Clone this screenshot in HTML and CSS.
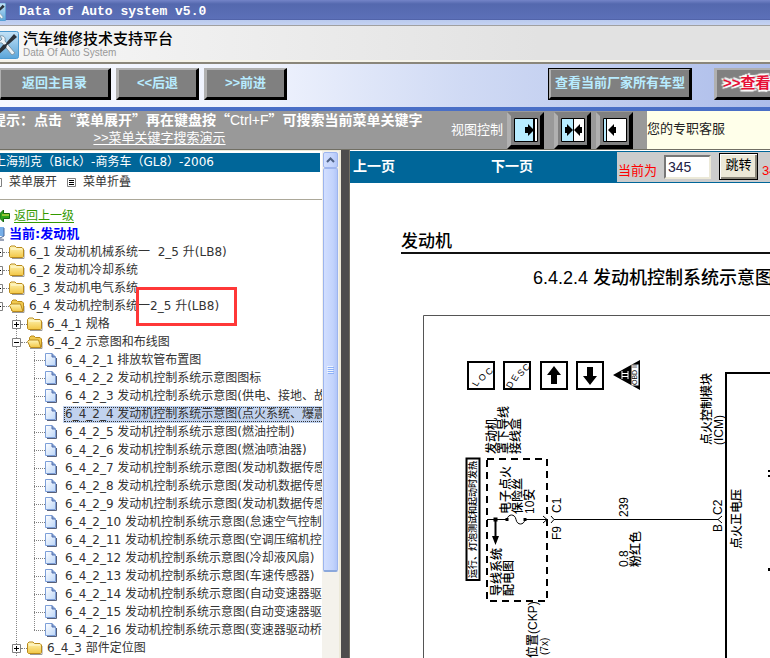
FILE: index.html
```html
<!DOCTYPE html>
<html lang="zh-CN">
<head>
<meta charset="utf-8">
<title>Data of Auto system v5.0</title>
<link rel="stylesheet" href="styles.css">
</head>
<body>
<svg class="defs" width="0" height="0" aria-hidden="true">
  <defs>
    <linearGradient id="fold" x1="0" y1="0" x2="0" y2="1"><stop offset="0" stop-color="#fff6b8"/><stop offset="1" stop-color="#f2c644"/></linearGradient>
    <linearGradient id="sheet" x1="0" y1="0" x2="1" y2="1"><stop offset="0" stop-color="#ffffff"/><stop offset="1" stop-color="#bcd6f8"/></linearGradient>
    <linearGradient id="tile" x1="0" y1="0" x2="0" y2="1"><stop offset="0" stop-color="#c4e2f6"/><stop offset="1" stop-color="#5aa5da"/></linearGradient>
    <symbol id="folder" viewBox="0 0 16 14">
      <path d="M3 13.5h12V5" fill="none" stroke="#999" stroke-width="1"/>
      <path d="M.5 11.500V2.500L2 1h4l1.500 1.500H13L14.500 4v7.500L13.500 12.500h-12z" fill="url(#fold)" stroke="#b98a1c"/>
      <path d="M2 4h11" stroke="#fffbdc"/>
    </symbol>
    <symbol id="folder-open" viewBox="0 0 16 14">
      <path d="M3 13.500h12V7" fill="none" stroke="#999"/>
      <path d="M2.500 11.500V2.500L4 1h3l1.500 1.500H13L14.500 4v8z" fill="#f0c94f" stroke="#b98a1c"/>
      <path d="M.5 6.500L2 5h9.500l2.500 7.500H3.500z" fill="url(#fold)" stroke="#b98a1c"/>
    </symbol>
    <symbol id="page" viewBox="0 0 12 14">
      <path d="M2 13.500h9.500V5" fill="none" stroke="#555e78"/>
      <path d="M.5.500H7L10.500 4v8.500H.500z" fill="url(#sheet)" stroke="#7d9fd8"/>
      <path d="M7 .500V4h3.500" fill="#7f9fd4" stroke="#5672ae"/>
    </symbol>
    <symbol id="logo" viewBox="0 0 28 28">
      <rect x=".5" y=".5" width="27" height="27" rx="2" fill="url(#tile)" stroke="#4d9ad0"/>
      <path d="M6 6c-1 4 1 6 5 6l10 12 3-2L14 10c1-4-2-6-5-5l2 3-2 2z" fill="#eef4f8" stroke="#7d97a8"/>
      <path d="M26 6l-8 7-2 1-1 3-9 8-2-2 8-9 3-1 1-2 7-8z" fill="#2c3138"/>
      <path d="M7 22l-3 4" stroke="#fff" stroke-width="2"/>
    </symbol>
    <symbol id="plus" viewBox="0 0 9 9"><path d="M.5.500h8v8h-8z" fill="#fff" stroke="#808080"/><path d="M2 4.500h5M4.500 2v5" stroke="#000"/></symbol>
    <symbol id="minus" viewBox="0 0 9 9"><path d="M.5.500h8v8h-8z" fill="#fff" stroke="#808080"/><path d="M2 4.500h5" stroke="#000"/></symbol>
    <symbol id="list" viewBox="0 0 9 9"><path d="M.5.500h8v8h-8z" fill="#fff" stroke="#808080"/><path d="M2 2.500h5M2 4.500h5M2 6.500h5" stroke="#000"/></symbol>
  </defs>
</svg>

<header class="titlebar">
  <svg class="title-icon" width="6" height="18" viewBox="14 0 9 28" preserveAspectRatio="xMaxYMid slice" aria-hidden="true"><use href="#logo" x="-5" width="28" height="28"/></svg>
  <span>Data of Auto system v5.0</span>
</header>

<div class="banner">
  <svg class="banner-logo" width="19" height="28" viewBox="9 0 19 28" aria-hidden="true"><use href="#logo" width="28" height="28"/></svg>
  <div class="brand">
    <h1>汽车维修技术支持平台</h1>
    <p>Data Of Auto System</p>
  </div>
</div>

<nav class="toolbar">
  <button class="bevel main" type="button">返回主目录</button>
  <button class="bevel step" type="button">&lt;&lt;后退</button>
  <button class="bevel step" type="button">&gt;&gt;前进</button>
  <button class="bevel models" type="button">查看当前厂家所有车型</button>
  <button class="bevel promo" type="button">&gt;&gt;查看</button>
</nav>

<section class="tips">
  <div class="tip-text">
    <p class="tip">提示：点击“菜单展开”再在键盘按“<span class="key">Ctrl+F</span>”可搜索当前菜单关键字</p>
    <a class="demo" href="#demo">&gt;&gt;菜单关键字搜索演示</a>
  </div>
  <div class="view">
    <span>视图控制</span>
    <button class="view-btn" type="button" aria-label="左侧展开"><svg width="24" height="24"><path d="M.5.500h23v23H.500z" fill="#fff" stroke="#000"/><path d="M1 1h18v22H1z" fill="#b8ecff"/><path d="M20 1v22" stroke="#000" stroke-width="2"/><path d="M11 9h3V6l6 6-6 6v-3h-3z"/></svg></button>
    <button class="view-btn" type="button" aria-label="居中"><svg width="24" height="24"><path d="M.5.500h23v23H.500z" fill="#fff" stroke="#000"/><path d="M1 1h11v22H1z" fill="#b8ecff"/><path d="M12.500 1v22" stroke="#000"/><path d="M4 9h2V6l6 6-6 6v-3H4zM21 9h-2V6l-6 6 6 6v-3h2z"/></svg></button>
    <button class="view-btn" type="button" aria-label="右侧展开"><svg width="24" height="24"><path d="M.5.500h23v23H.500z" fill="#fff" stroke="#000"/><path d="M1 1h2v22H1z" fill="#b8ecff"/><path d="M3.500 1v22" stroke="#000"/><path d="M13 9h-2V6l-6 6 6 6v-3h2z"/></svg></button>
  </div>
  <div class="service">您的专职客服</div>
</section>

<main class="frames">
  <aside class="side">
    <div class="side-body">
      <h2 class="car">上海别克（Bick）-商务车（GL8）-2006</h2>
      <div class="fold-row">
        <a href="#open"><svg class="box" width="9" height="9" aria-hidden="true"><use href="#list"/></svg>菜单展开</a>
        <a href="#close"><svg class="box" width="9" height="9" aria-hidden="true"><use href="#list"/></svg>菜单折叠</a>
      </div>
      <div class="back"><svg width="10" height="12" aria-hidden="true"><path d="M0 3.500L3.500 0v3.500h6v5h-6V12L0 8.500z" fill="#2da51c" stroke="#176b0c"/><path d="M2 5h7" stroke="#ffe94a"/></svg><a href="#up">返回上一级</a></div>
      <div class="current"><svg width="5" height="14" aria-hidden="true"><path d="M0 0h4v9H0z" fill="#76aee8"/><path d="M4 1v8L0 11" fill="none" stroke="#47669a"/><path d="M0 11l4 1v2H0z" fill="#9aa3b8"/></svg><strong>当前:发动机</strong></div>

      <ul class="tree">
        <li><div class="row"><button class="tog" type="button" aria-label="展开"><svg width="9" height="9"><use href="#plus"/></svg></button><i></i><a href="#6_1"><svg width="16" height="14"><use href="#folder"/></svg><span>6_1 发动机机械系统一&nbsp; 2_5 升(LB8)</span></a></div></li>
        <li><div class="row"><button class="tog" type="button" aria-label="展开"><svg width="9" height="9"><use href="#plus"/></svg></button><i></i><a href="#6_2"><svg width="16" height="14"><use href="#folder"/></svg><span>6_2 发动机冷却系统</span></a></div></li>
        <li><div class="row"><button class="tog" type="button" aria-label="展开"><svg width="9" height="9"><use href="#plus"/></svg></button><i></i><a href="#6_3"><svg width="16" height="14"><use href="#folder"/></svg><span>6_3 发动机电气系统</span></a></div></li>
        <li><div class="row marked"><button class="tog" type="button" aria-label="折叠"><svg width="9" height="9"><use href="#minus"/></svg></button><i></i><a href="#6_4"><svg width="16" height="14"><use href="#folder-open"/></svg><span>6_4 发动机控制系统一2_5 升(LB8)</span></a></div>
          <ul>
            <li><div class="row"><button class="tog" type="button" aria-label="展开"><svg width="9" height="9"><use href="#plus"/></svg></button><i></i><a href="#6_4_1"><svg width="16" height="14"><use href="#folder"/></svg><span>6_4_1 规格</span></a></div></li>
            <li><div class="row"><button class="tog" type="button" aria-label="折叠"><svg width="9" height="9"><use href="#minus"/></svg></button><i></i><a href="#6_4_2"><svg width="16" height="14"><use href="#folder-open"/></svg><span>6_4_2 示意图和布线图</span></a></div>
              <ul class="leaves">
                <li><div class="row"><i></i><a href="#p1"><svg width="12" height="14"><use href="#page"/></svg><span>6_4_2_1 排放软管布置图</span></a></div></li>
                <li><div class="row"><i></i><a href="#p2"><svg width="12" height="14"><use href="#page"/></svg><span>6_4_2_2 发动机控制系统示意图图标</span></a></div></li>
                <li><div class="row"><i></i><a href="#p3"><svg width="12" height="14"><use href="#page"/></svg><span>6_4_2_3 发动机控制系统示意图(供电、接地、故障</span></a></div></li>
                <li><div class="row"><i></i><a href="#p4" class="selected" aria-current="page"><svg width="12" height="14"><use href="#page"/></svg><span>6_4_2_4 发动机控制系统示意图(点火系统、爆震传感器)</span></a></div></li>
                <li><div class="row"><i></i><a href="#p5"><svg width="12" height="14"><use href="#page"/></svg><span>6_4_2_5 发动机控制系统示意图(燃油控制)</span></a></div></li>
                <li><div class="row"><i></i><a href="#p6"><svg width="12" height="14"><use href="#page"/></svg><span>6_4_2_6 发动机控制系统示意图(燃油喷油器)</span></a></div></li>
                <li><div class="row"><i></i><a href="#p7"><svg width="12" height="14"><use href="#page"/></svg><span>6_4_2_7 发动机控制系统示意图(发动机数据传感器</span></a></div></li>
                <li><div class="row"><i></i><a href="#p8"><svg width="12" height="14"><use href="#page"/></svg><span>6_4_2_8 发动机控制系统示意图(发动机数据传感器</span></a></div></li>
                <li><div class="row"><i></i><a href="#p9"><svg width="12" height="14"><use href="#page"/></svg><span>6_4_2_9 发动机控制系统示意图(发动机数据传感器</span></a></div></li>
                <li><div class="row"><i></i><a href="#p10"><svg width="12" height="14"><use href="#page"/></svg><span>6_4_2_10 发动机控制系统示意图(怠速空气控制</span></a></div></li>
                <li><div class="row"><i></i><a href="#p11"><svg width="12" height="14"><use href="#page"/></svg><span>6_4_2_11 发动机控制系统示意图(空调压缩机控</span></a></div></li>
                <li><div class="row"><i></i><a href="#p12"><svg width="12" height="14"><use href="#page"/></svg><span>6_4_2_12 发动机控制系统示意图(冷却液风扇)</span></a></div></li>
                <li><div class="row"><i></i><a href="#p13"><svg width="12" height="14"><use href="#page"/></svg><span>6_4_2_13 发动机控制系统示意图(车速传感器)</span></a></div></li>
                <li><div class="row"><i></i><a href="#p14"><svg width="12" height="14"><use href="#page"/></svg><span>6_4_2_14 发动机控制系统示意图(自动变速器驱</span></a></div></li>
                <li><div class="row"><i></i><a href="#p15"><svg width="12" height="14"><use href="#page"/></svg><span>6_4_2_15 发动机控制系统示意图(自动变速器驱</span></a></div></li>
                <li><div class="row"><i></i><a href="#p16"><svg width="12" height="14"><use href="#page"/></svg><span>6_4_2_16 发动机控制系统示意图(变速器驱动桥</span></a></div></li>
              </ul>
            </li>
            <li><div class="row"><button class="tog" type="button" aria-label="展开"><svg width="9" height="9"><use href="#plus"/></svg></button><i></i><a href="#6_4_3"><svg width="16" height="14"><use href="#folder"/></svg><span>6_4_3 部件定位图</span></a></div></li>
          </ul>
        </li>
      </ul>
    </div>
    <div class="scroll" aria-hidden="true">
      <div class="scroll-up"><svg width="9" height="6"><path d="M1 5l3.500-3.500L8 5" fill="none" stroke="#4d6185" stroke-width="2"/></svg></div>
      <div class="thumb"><svg width="7" height="8"><path d="M0 .500h6M0 2.500h6M0 4.500h6M0 6.500h6" stroke="#eef4fe"/><path d="M1 1.500h6M1 3.500h6M1 5.500h6M1 7.500h6" stroke="#8cb0f8"/></svg></div>
    </div>
  </aside>
  <div class="splitter"></div>

  <section class="content">
    <div class="pager">
      <a href="#prev">上一页</a>
      <a href="#next">下一页</a>
      <form class="jump">
        <label for="pageno">当前为</label>
        <input id="pageno" type="text" value="345">
        <button type="button">跳转</button>
        <span>345</span>
      </form>
    </div>
    <article class="doc">
      <h3>发动机</h3>
      <h2>6.4.2.4 发动机控制系统示意图</h2>
      <svg class="diagram" role="img" aria-label="发动机控制系统示意图">
        <g transform="translate(-350 -300)">
          <path d="M423.500 670V315.500H1400" fill="none" stroke="#555"/>
          <g fill="#fff" stroke="#000" stroke-width="2">
            <path d="M468 362h26v27h-26zM504 362h26v27h-26zM541 362h26v27h-26zM577 362h26v27h-26z"/>
          </g>
          <path d="M554 366l7 9h-4v9h-6v-9h-4zM590 385l7-9h-4v-9h-6v9h-4zM613 375l27-15v30z"/>
          <path d="M631.500 364.500h7v21h-7z" fill="#fff"/>
          <path d="M622 371v8M628 371v8M622 373.500h6M622 376.500h6" fill="none" stroke="#fff"/>
          <g class="small">
            <text transform="translate(477 387) rotate(-60)">L</text>
            <text transform="translate(482 382) rotate(-45)">O</text>
            <text transform="translate(489 376) rotate(-45)">C</text>
            <text transform="translate(511 389) rotate(-60)">D</text>
            <text transform="translate(516 382) rotate(-60)">E</text>
            <text transform="translate(521 377) rotate(-45)">S</text>
            <text transform="translate(526 372) rotate(-45)">C</text>
            <text class="tiny" transform="translate(637 385) rotate(-90)">OBD II</text>
          </g>
          <path d="M466.500 458.500h13v121.500h-13z" fill="none" stroke="#000" stroke-width="2"/>
          <path d="M487 459h60v142h-60z" fill="none" stroke="#000" stroke-width="2" stroke-dasharray="7 5"/>
          <g fill="none" stroke="#000">
            <path d="M487 519.500h20M525 519.500h22M557 519.500h161M507 519.500c1-6 8-6 9 0s8 6 9 0M543 516l4 3.500-4 3.500M551 516l3 3.500h3M551 523l3-3.500M722 516l-4 3.500 4 3.500"/>
            <path d="M495.500 519.500V536" stroke-width="2"/>
            <path d="M726 670V373h700" stroke-width="2"/>
          </g>
          <path d="M492 536h7l-3.500 9zM493.500 517.500h4v4h-4zM505.500 518h3v3h-3zM523.500 518h3v3h-3z"/>
          <g class="label">
            <text transform="translate(496 454) rotate(-90)">发动机</text>
            <text transform="translate(508 454) rotate(-90)">罩下导线</text>
            <text transform="translate(520 454) rotate(-90)">接线盒</text>
            <text class="nine" transform="translate(476 578) rotate(-90)">运行、灯泡测试和起动时发热</text>
            <text transform="translate(510 514) rotate(-90)">电子点火</text>
            <text transform="translate(522 514) rotate(-90)">保险丝</text>
            <text transform="translate(534 514) rotate(-90)">10安</text>
            <text transform="translate(561 513) rotate(-90)">C1</text>
            <text transform="translate(561 540) rotate(-90)">F9</text>
            <text transform="translate(501 596) rotate(-90)">导线系统</text>
            <text transform="translate(513 596) rotate(-90)">配电图</text>
            <text transform="translate(628 517) rotate(-90)">239</text>
            <text transform="translate(628 567) rotate(-90)">0.8</text>
            <text transform="translate(640 567) rotate(-90)">粉红色</text>
            <text transform="translate(537 658) rotate(-90)">位置(CKP)</text>
            <text class="ten" transform="translate(548 655) rotate(-90)">(7x)</text>
            <text transform="translate(711 445) rotate(-90)">点火控制模块</text>
            <text transform="translate(723 445) rotate(-90)">(ICM)</text>
            <text transform="translate(722 515) rotate(-90)">C2</text>
            <text transform="translate(722 532) rotate(-90)">B</text>
            <text transform="translate(741 549) rotate(-90)">点火正电压</text>
          </g>
          <path d="M769 470v2M769 475v2M769 568v3" stroke="#000" stroke-width="2"/>
        </g>
      </svg>
    </article>
  </section>
</main>
</body>
</html>
```
FILE: styles.css
```css
*, *::before, *::after { box-sizing: border-box; }

body {
  margin: 0;
  height: 100vh;
  display: flex;
  flex-direction: column;
  overflow: hidden;
  font: 12px/18px "DejaVu Sans", "Noto Sans CJK SC", sans-serif;
  color: #333;
  background: #fff;
}

h1, h2, h3, p, ul { margin: 0; padding: 0; font-weight: normal; }
ul { list-style: none; }
a { color: inherit; text-decoration: none; }
button { font: inherit; padding: 0; cursor: pointer; }
svg { display: block; flex: none; }
.defs { position: absolute; }

.titlebar {
  display: flex;
  align-items: center;
  gap: 13px;
  height: 26px;
  padding-bottom: 3px;
  flex: none;
  background: linear-gradient(#7484c8, #5468ae 4px, #5c70b8 19px, #47589c 20px, #b9caee 20px, #c6d3f2 25px, #a0a0a0 25px);
  color: #fff;
  font: bold 13px/20px "Liberation Mono", monospace;
}

.banner {
  display: flex;
  align-items: center;
  gap: 4px;
  height: 38px;
  flex: none;
  padding-bottom: 2px;
  background: linear-gradient(90deg, #f7f7f7, #e2e2e2 70%);
  border-bottom: 2px solid #8a867a;
  box-shadow: inset 0 -2px #f5f3ea;
}
.banner-logo { margin-top: 4px; }
.brand h1 {
  font: 500 15px/19px "Noto Sans CJK SC", sans-serif;
  color: #000;
}
.brand p {
  font: 10px/11px "Liberation Sans", sans-serif;
  color: #999;
}

.toolbar {
  display: flex;
  align-items: center;
  height: 43px;
  flex: none;
  gap: 5px;
  padding-bottom: 3px;
  background: linear-gradient(90deg, #f6f8ff, #eef2fd 35%, #d0daf4 60%, #adbdea);
}
.bevel {
  flex: none;
  height: 32px;
  padding-bottom: 2px;
  border: 3px solid #000;
  border-top: 2px solid #b0b0b0;
  border-left-color: #b0b0b0;
  background: #808080;
  color: #b8ecff;
  font: bold 13px/24px "Liberation Sans", "Noto Sans CJK SC", sans-serif;
  white-space: nowrap;
  overflow: hidden;
}
.main { width: 111px; border-left-width: 1px; }
.step { width: 83px; }
.models { width: 144px; margin-left: 256px; outline: 1px solid #000; outline-offset: -1px; }
.promo {
  width: 144px;
  margin-left: 17px;
  padding-left: 6px;
  text-align: left;
  color: #e60f35;
  font-size: 15px;
  text-shadow: 0 0 2px #fff, 2px 1px 1px #fff, -2px -1px 1px #fff, 1px -2px 1px #fff, -1px 2px 1px #fff;
}

.tips {
  display: flex;
  height: 42px;
  flex: none;
  border-top: 4px solid #4a6fc6;
  background: #999;
  color: #fff;
  font: 13px/18px "Liberation Sans", "Noto Sans CJK SC", sans-serif;
}
.tip-text {
  flex: none;
  width: 451px;
  overflow: hidden;
  text-align: center;
  white-space: nowrap;
}
.tip {
  text-align: left;
  text-indent: -8px;
  font: bold 14px/17px "Noto Sans CJK SC", sans-serif;
}
.key { font: 14px/17px "Liberation Sans", sans-serif; }
.demo {
  display: inline-block;
  margin-right: 132px;
  text-decoration: underline;
  text-underline-offset: 2px;
}
.view { display: flex; align-items: center; gap: 10px; flex: none; }
.view span { margin-right: -6px; }
.view-btn {
  display: grid;
  place-content: center;
  width: 37px;
  height: 37px;
  border: 4px solid #000;
  border-top-color: #808080;
  border-left-color: #b0b0b0;
  background: #808080;
}
.view-btn:last-child { margin-left: -5px; }
.service {
  flex: 1;
  margin-left: 14px;
  background: #ffffea;
  color: #222;
  line-height: 36px;
}

.frames {
  display: flex;
  flex: 1;
  min-height: 0;
  border-top: 1px solid #716f64;
}
.side {
  display: flex;
  flex: none;
  width: 341px;
  border-top: 1px solid #ece9d8;
  border-right: 2px solid #ece9d8;
}
.side-body {
  flex: 1;
  min-width: 0;
  overflow: hidden;
  padding-top: 2px;
  white-space: nowrap;
}
.car {
  margin-right: 2px;
  background: #069;
  color: #fff;
  font-size: 12px;
  line-height: 19px;
  text-indent: -6px;
}
.fold-row {
  display: flex;
  gap: 10px;
  height: 28px;
  padding-top: 1px;
  border-bottom: 1px solid #aca899;
}
.fold-row a { display: flex; align-items: center; gap: 7px; height: 18px; }
.fold-row a:first-child { margin-left: -7px; }
.back {
  display: flex;
  align-items: center;
  gap: 4px;
  margin-top: 7px;
  color: #390;
}
.back a { text-decoration: underline; text-underline-offset: 2px; }
.current {
  display: flex;
  align-items: center;
  gap: 4px;
  color: #00f;
  font-size: 13px;
}

.tree { margin-left: -6px; }
.row { display: flex; align-items: center; height: 18px; }
.row i { flex: none; width: 6px; border-top: 1px dotted #808080; }
.row a { display: flex; align-items: center; gap: 2px; flex: none; }
.row span { padding: 0 2px; line-height: 18px; }
.tog { flex: none; width: 9px; height: 9px; border: 0; background: none; }
.tree ul { margin-left: 22px; }
.tree ul > li {
  background: repeating-linear-gradient(#888 0 1px, transparent 1px 2px) no-repeat 0 0 / 1px 100%;
}
.tree ul .tog { margin-left: -4px; }
.tree .leaves { margin-left: 18px; }
.leaves > li:last-child { background-size: 1px 9px; }
.leaves .row i { width: 11px; }
.leaves .row a { gap: 6px; }
.row .selected span {
  background: #c1d2ee;
  line-height: 17px;
  outline: 1px dotted #333;
  outline-offset: -2px;
}
.marked { position: relative; }
.marked::after {
  content: "";
  position: absolute;
  left: 142px;
  top: -10px;
  width: 101px;
  height: 39px;
  border: 3px solid #ff3838;
}

.scroll {
  display: flex;
  flex-direction: column;
  flex: none;
  width: 17px;
  padding: 1px 1px 0;
  background: #f4f2ec;
}
.scroll-up, .thumb {
  display: grid;
  place-content: center;
  border: 1px solid #9db5ee;
  border-radius: 2px;
  background: linear-gradient(90deg, #d2dfff, #c2d3fc 70%, #b2c6f8);
}
.scroll-up { height: 16px; }
.thumb { height: 404px; border-bottom: 2px solid #8ba8dc; }

.splitter {
  flex: none;
  width: 8px;
  background: #4d4d4d;
}

.content { flex: 1; min-width: 0; overflow: hidden; padding-top: 1px; border-left: 1px solid #716f64; }
.pager {
  display: flex;
  height: 32px;
  background: #069;
  color: #fff;
  font: bold 14px/31px "Liberation Sans", "Noto Sans CJK SC", sans-serif;
}
.pager a { flex: none; width: 138px; padding-left: 3px; }
.pager a + a { width: 129px; }
.jump {
  display: flex;
  flex: 1 0 auto;
  align-items: center;
  margin: 1px 0;
  padding-left: 1px;
  background: #ccc;
  color: #f00;
  font: 13px/18px "Liberation Sans", "Noto Sans CJK SC", sans-serif;
}
.jump label, .jump span { padding-top: 7px; }
.jump input {
  width: 47px;
  height: 24px;
  margin: 0 8px 0 7px;
  padding: 0 2px;
  border: 2px solid #ece9d8;
  border-top-color: #777;
  border-left-color: #777;
  border-radius: 0;
  background: #fff;
  color: #224;
  font: 14px/18px "Liberation Sans", sans-serif;
}
.jump button {
  width: 39px;
  height: 27px;
  margin: 0 4px 2px 0;
  padding-bottom: 3px;
  border: 1px solid #000;
  box-shadow: inset 1px 1px #fff, inset -2px -2px #8b887b;
  background: #ece9d8;
  color: #000;
}

.doc { color: #000; white-space: nowrap; }
.doc h3 {
  margin: 46px 0 0 51px;
  height: 25px;
  border-bottom: 2px solid #111;
  font: 500 17px/26px "Liberation Sans", "Noto Sans CJK SC", sans-serif;
}
.doc h2 {
  margin: 12px 0 9px 183px;
  font: 500 18px/25px "Liberation Sans", "Noto Sans CJK SC", sans-serif;
}
.diagram { width: 100%; height: 358px; overflow: hidden; }
.label text { font: 500 12px "Liberation Sans", "Noto Sans CJK SC", sans-serif; }
.label .nine { font-size: 9px; }
.label .ten { font-size: 10px; }
.small text { font: 9px "Liberation Sans", sans-serif; }
.small .tiny { font-size: 7px; }
```
